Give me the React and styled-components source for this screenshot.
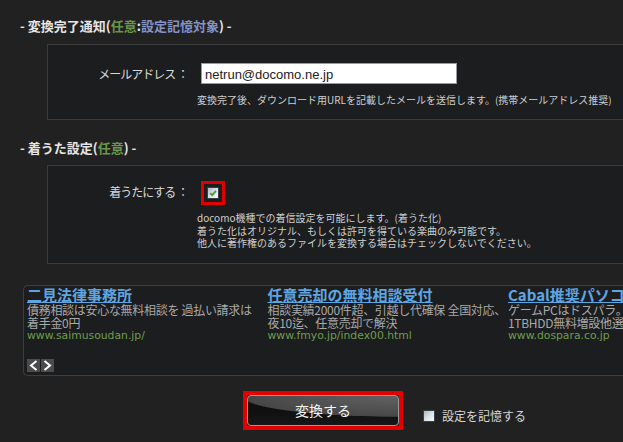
import React from "react";
import styled, { createGlobalStyle } from "styled-components";

const Global = createGlobalStyle`
  html, body { margin: 0; padding: 0; background: #212121; overflow: hidden; }
  body { font-family: "Noto Sans CJK JP", sans-serif; }
`;

const Page = styled.div`
  width: 780px;
  height: 442px;
  box-sizing: border-box;
  padding: 17px 0 0 20px;
  background: #212121;
`;

const SectionTitle = styled.div`
  margin-top: ${(p) => p.$mt || 0}px;
  font-size: 13px;
  font-weight: bold;
  line-height: 18px;
  color: #e6e6e6;
  white-space: nowrap;
`;

const Opt = styled.span`
  color: #68964b;
`;

const Memo = styled.span`
  color: #8492c6;
`;

const Panel = styled.div`
  margin: ${(p) => p.$mt}px 0 0 27px;
  padding: ${(p) => p.$pt}px 0 ${(p) => p.$pb}px 0;
  background: #1b1d1f;
  border: 1px solid #3b3b3b;
  border-right: none;
  display: grid;
  grid-template-columns: 140px 1fr;
  column-gap: 9px;
`;

const Label = styled.div`
  text-align: right;
  font-size: 12px;
  letter-spacing: -1px;
  line-height: ${(p) => p.$lh}px;
  color: #dadada;
  white-space: nowrap;
`;

const Field = styled.div`
  display: flex;
  flex-direction: column;
  align-items: flex-start;
`;

const TextInput = styled.input`
  box-sizing: border-box;
  width: 256px;
  height: 21px;
  margin: 0 0 0 4px;
  padding: 1px 3px 0;
  border: 1px solid #9a9a9a;
  background: #ffffff;
  font-family: "Liberation Sans", Arial, sans-serif;
  font-size: 13px;
  color: #222;
  outline: none;
`;

const Help = styled.div`
  margin-top: ${(p) => p.$mt}px;
  font-size: 10px;
  line-height: ${(p) => p.$lh}px;
  color: #cfcfcf;
  white-space: nowrap;
`;

const RedFrame = styled.div`
  border: 3px solid #e00000;
  padding: 3px;
  margin-left: 4px;
  line-height: 0;
`;

const CheckBox = styled.span`
  display: inline-block;
  box-sizing: border-box;
  width: 12px;
  height: 12px;
  border: 1px solid #3a3f46;
  background: linear-gradient(135deg, #aeb7c4 0%, #dfe4ec 55%, #f7f9fc 100%);
  line-height: 0;
  vertical-align: top;
`;

const AdBox = styled.div`
  margin: 21px 0 0 3px;
  padding: 1px 0 3px 3px;
  background: #1b1d1f;
  border: 1px solid #3d3d3d;
  border-right: none;
  border-radius: 5px 0 0 5px;
`;

const AdList = styled.div`
  display: grid;
  grid-template-columns: repeat(3, 240.5px);
`;

const Ad = styled.div`
  white-space: nowrap;
`;

const AdTitle = styled.a`
  display: block;
  width: fit-content;
  font-size: 15px;
  font-weight: bold;
  line-height: 16px;
  color: #5ea6e2;
  text-decoration: underline;
  text-underline-offset: 1px;
`;

const AdDesc = styled.div`
  font-size: 12px;
  line-height: 13.5px;
  color: #a9a9a9;
  letter-spacing: -0.3px;
`;

const AdUrl = styled.div`
  font-family: "DejaVu Sans", Verdana, sans-serif;
  font-size: 10.8px;
  line-height: 12px;
  color: #6f9d4e;
`;

const Arrows = styled.div`
  display: flex;
  gap: 1px;
  margin-top: 17px;
`;

const ArrowBtn = styled.span`
  width: 13px;
  height: 13px;
  background: #4b4b4b;
  display: flex;
  align-items: center;
  justify-content: center;
`;

const Actions = styled.div`
  display: flex;
  align-items: flex-end;
  margin: 15px 0 0 223px;
`;

const ButtonFrame = styled.div`
  border: 4px solid #e20000;
  line-height: 0;
`;

const ConvertButton = styled.button`
  box-sizing: border-box;
  width: 152px;
  height: 31px;
  padding: 0;
  border: 1px solid #9a9a9a;
  border-radius: 4px;
  background:
    radial-gradient(158px 21px at 100% 0, #626262 0%, #474747 97%, transparent 100%),
    linear-gradient(#0a0a0a, #161616);
  color: #f4f4f4;
  font-family: "Noto Sans CJK JP", sans-serif;
  font-size: 14px;
  line-height: 29px;
  cursor: pointer;
`;

const Remember = styled.label`
  display: flex;
  align-items: center;
  gap: 7px;
  margin: 0 0 7px 20px;
  font-size: 12px;
  line-height: 14px;
  color: #d6d6d6;
`;

const Check = () => (
  <CheckBox>
    <svg width="10" height="10" viewBox="0 0 10 10">
      <path d="M2.2 5.2 L4.2 7.2 L8 2.8" fill="none" stroke="#4c9a2a" strokeWidth="1.8" />
    </svg>
  </CheckBox>
);

const Chevron = ({ dir }) => (
  <svg width="9" height="11" viewBox="0 0 9 11">
    <path
      d={dir === "left" ? "M7.5 1 L2 5.5 L7.5 10" : "M1.5 1 L7 5.5 L1.5 10"}
      fill="none"
      stroke="#ffffff"
      strokeWidth="2"
    />
  </svg>
);

const ads = [
  {
    title: "二見法律事務所",
    lines: ["債務相談は安心な無料相談を 過払い請求は", "着手金0円"],
    url: "www.saimusoudan.jp/",
  },
  {
    title: "任意売却の無料相談受付",
    lines: ["相談実績2000件超、引越し代確保 全国対応、", "夜10迄、任意売却で解決"],
    url: "www.fmyo.jp/index00.html",
  },
  {
    title: "Cabal推奨パソコン",
    lines: ["ゲームPCはドスパラ。今なら", "1TBHDD無料増設他選べる特典"],
    url: "www.dospara.co.jp",
  },
];

export default function App() {
  return (
    <>
      <Global />
      <Page>
        <SectionTitle>
          - 変換完了通知(<Opt>任意</Opt>:<Memo>設定記憶対象</Memo>) -
        </SectionTitle>
        <Panel $mt={9} $pt={18} $pb={12}>
          <Label $lh={21}>メールアドレス ：</Label>
          <Field>
            <TextInput defaultValue="netrun@docomo.ne.jp" />
            <Help $mt={9} $lh={14}>
              変換完了後、ダウンロード用URLを記載したメールを送信します。(携帯メールアドレス推奨)
            </Help>
          </Field>
        </Panel>

        <SectionTitle $mt={19}>
          - 着うた設定(<Opt>任意</Opt>) -
        </SectionTitle>
        <Panel $mt={8} $pt={15} $pb={13}>
          <Label $lh={21}>着うたにする ：</Label>
          <Field>
            <RedFrame>
              <Check />
            </RedFrame>
            <Help $mt={7} $lh={12.5}>
              docomo機種での着信設定を可能にします。(着うた化)
              <br />
              着うた化はオリジナル、もしくは許可を得ている楽曲のみ可能です。
              <br />
              他人に著作権のあるファイルを変換する場合はチェックしないでください。
            </Help>
          </Field>
        </Panel>

        <AdBox>
          <AdList>
            {ads.map((ad) => (
              <Ad key={ad.url}>
                <AdTitle>{ad.title}</AdTitle>
                {ad.lines.map((l) => (
                  <AdDesc key={l}>{l}</AdDesc>
                ))}
                <AdUrl>{ad.url}</AdUrl>
              </Ad>
            ))}
          </AdList>
          <Arrows>
            <ArrowBtn>
              <Chevron dir="left" />
            </ArrowBtn>
            <ArrowBtn>
              <Chevron dir="right" />
            </ArrowBtn>
          </Arrows>
        </AdBox>

        <Actions>
          <ButtonFrame>
            <ConvertButton>変換する</ConvertButton>
          </ButtonFrame>
          <Remember>
            <CheckBox />
            設定を記憶する
          </Remember>
        </Actions>
      </Page>
    </>
  );
}
